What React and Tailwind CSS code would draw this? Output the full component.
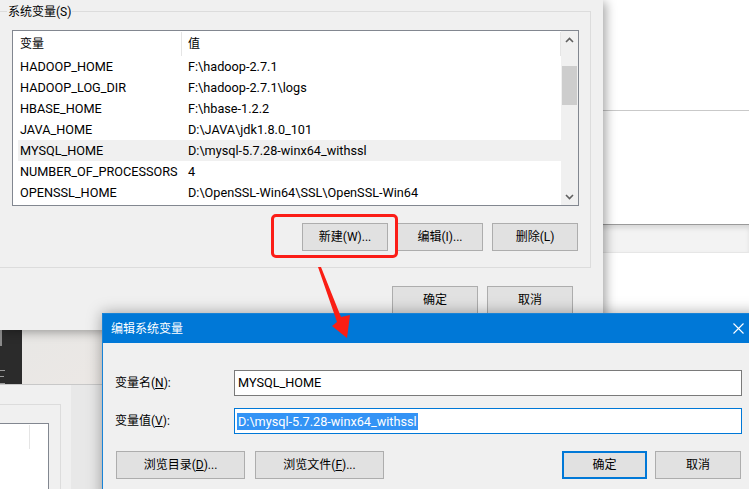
import React from 'react'

const ROWS = [
  ['HADOOP_HOME', 'F:\\hadoop-2.7.1'],
  ['HADOOP_LOG_DIR', 'F:\\hadoop-2.7.1\\logs'],
  ['HBASE_HOME', 'F:\\hbase-1.2.2'],
  ['JAVA_HOME', 'D:\\JAVA\\jdk1.8.0_101'],
  ['MYSQL_HOME', 'D:\\mysql-5.7.28-winx64_withssl'],
  ['NUMBER_OF_PROCESSORS', '4'],
  ['OPENSSL_HOME', 'D:\\OpenSSL-Win64\\SSL\\OpenSSL-Win64'],
]

function Btn({ children, primary, className = '' }) {
  const edge = primary ? 'border-2 border-[#0078d7]' : 'border border-[#adadad]'
  return (
    <div className={`flex h-[28px] items-center justify-center bg-[#e1e1e1] text-[12px] text-black ${edge} ${className}`}>
      {children}
    </div>
  )
}

function Chevron({ down }) {
  return (
    <svg width="9" height="6" viewBox="0 0 9 6">
      <path d={down ? 'M1 1 L4.5 4.5 L8 1' : 'M1 5 L4.5 1.5 L8 5'} stroke="#606060" strokeWidth="1.6" fill="none" />
    </svg>
  )
}

function VarList() {
  return (
    <div className="ml-[13px] mt-[18px] flex h-[176px] w-[567px] border border-[#828790] bg-white">
      <div className="flex-1 pl-[5px]">
        <div className="flex h-[25px] items-center text-[12px]">
          <div className="flex h-[24px] w-[164px] items-center border-r border-[#e5e5e5] pl-[2px]">变量</div>
          <div className="flex h-[24px] flex-1 items-center border-r border-[#e5e5e5] pl-[6px]">值</div>
        </div>
        {ROWS.map(([name, value]) => (
          <div
            key={name}
            className={`flex h-[21px] items-center whitespace-nowrap text-[12.7px] leading-[21px] ${name === 'MYSQL_HOME' ? 'bg-[#f0f0f0]' : ''}`}
          >
            <div className="w-[164px] pl-[2px]">{name}</div>
            <div className="flex-1 pl-[6px]">{value}</div>
          </div>
        ))}
      </div>
      <div className="flex w-[17px] flex-col bg-[#f0f0f0]">
        <div className="flex h-[17px] items-center justify-center"><Chevron /></div>
        <div className="flex-1 px-[1px]">
          <div className="mt-[18px] h-[39px] bg-[#cdcdcd]" />
        </div>
        <div className="flex h-[17px] items-center justify-center"><Chevron down /></div>
      </div>
    </div>
  )
}

function BackDialog() {
  return (
    <div className="absolute left-0 top-0 h-[330px] w-[603px] bg-[#f0f0f0] shadow-[3px_2px_10px_rgba(0,0,0,0.35)]">
      <div className="relative ml-[-2px] mt-[11px] h-[257px] w-[593px] border border-[#dcdcdc]">
        <span className="absolute left-[8px] top-[-9px] bg-[#f0f0f0] px-[1px] text-[12px] leading-[18px]">系统变量(S)</span>
        <VarList />
        <div className="mt-[17px] flex justify-end gap-[9px] pr-[12px]">
          <Btn className="w-[86px]">新建(W)...</Btn>
          <Btn className="w-[86px]">编辑(I)...</Btn>
          <Btn className="w-[86px]">删除(L)</Btn>
        </div>
      </div>
      <div className="mt-[18px] flex justify-end gap-[9px] pr-[30px]">
        <Btn className="w-[86px]">确定</Btn>
        <Btn className="w-[86px]">取消</Btn>
      </div>
      <div className="absolute left-[271px] top-[214px] h-[44px] w-[127px] rounded-[5px] border-[3px] border-[#fb1d17]" />
    </div>
  )
}

function RightWindows() {
  return (
    <div className="absolute left-[590px] top-0 flex h-[313px] w-[160px] flex-col bg-white">
      <div className="h-[111px] border-b border-[#c9c9c9]" />
      <div className="h-[113px]" />
      <div className="h-[29px] border-b border-t border-[#e6e6e6] border-t-[#9a9a9a] bg-[#f3f3f3] shadow-[inset_0_3px_5px_rgba(0,0,0,0.12)]" />
      <div className="flex-1" />
    </div>
  )
}

function LowerLeft() {
  return (
    <div className="absolute left-0 top-[330px] flex h-[159px] w-[110px] flex-col">
      <div className="flex h-[75px]">
        <div className="flex w-[22px] flex-col bg-[#2b2b2b]">
          <div className="h-[16px] w-[2px] bg-[#8a8a8a]" />
          <div className="mt-[24px] h-[1px] w-[5px] bg-[#9a9a9a]" />
          <div className="mt-[5px] h-[1px] w-[4px] bg-[#9a9a9a]" />
          <div className="mt-[6px] h-[1px] w-[5px] bg-[#9a9a9a]" />
        </div>
        <div className="flex-1 bg-gradient-to-br from-[#e8e7e5] to-[#ece8e5]" />
      </div>
      <div className="flex flex-1 border-t border-[#c8c8c8] bg-[#f0f0f0]">
        <div className="w-[71px] overflow-hidden">
          <div className="ml-[-10px] mt-[19px] h-[100px] w-[71px] border border-[#dcdcdc]">
            <div className="mt-[18px] h-[80px] w-[58px] border border-[#828790] bg-white pt-[1px]">
              <div className="h-[24px] w-[38px] border-r border-[#e5e5e5]" />
            </div>
          </div>
        </div>
        <div className="flex-1 bg-[#e8e8e8]" />
      </div>
    </div>
  )
}

function EditDialog() {
  return (
    <div className="absolute left-[102px] top-[313px] h-[190px] w-[660px] border border-[#1883d7] bg-[#f0f0f0] shadow-[0_0_14px_rgba(0,0,0,0.35)]">
      <div className="flex h-[29px] items-center bg-[#0078d7] pl-[8px] text-[12px] text-white">
        <span>编辑系统变量</span>
        <svg className="ml-auto mr-[17px]" width="11" height="11" viewBox="0 0 11 11">
          <path d="M0.5 0.5 L10.5 10.5 M10.5 0.5 L0.5 10.5" stroke="#ffffff" strokeWidth="1.1" />
        </svg>
      </div>
      <div className="pl-[12px]">
        <div className="mt-[27px] flex items-center">
          <div className="w-[119px] text-[12px]">变量名(<span className="underline">N</span>):</div>
          <div className="flex h-[26px] w-[508px] items-center border border-[#7a7a7a] bg-white pl-[3px] text-[12.7px]">MYSQL_HOME</div>
        </div>
        <div className="mt-[12px] flex items-center">
          <div className="w-[119px] text-[12px]">变量值(<span className="underline">V</span>):</div>
          <div className="flex h-[26px] w-[508px] items-center border border-[#0078d7] bg-white pl-[2px] text-[12.7px]">
            <span className="bg-[#3393f5] px-[1px] leading-[17px] text-white">D:\mysql-5.7.28-winx64_withssl</span>
          </div>
        </div>
        <div className="ml-[1px] mt-[17px] flex">
          <Btn className="w-[129px]">浏览目录(<span className="underline">D</span>)...</Btn>
          <Btn className="ml-[10px] w-[129px]">浏览文件(<span className="underline">F</span>)...</Btn>
          <Btn primary className="ml-[178px] w-[85px]">确定</Btn>
          <Btn className="ml-[8px] w-[86px]">取消</Btn>
        </div>
      </div>
    </div>
  )
}

export default function App() {
  return (
    <div className="relative h-[489px] w-[749px] overflow-hidden bg-white font-[Roboto,'Noto_Sans_CJK_SC',sans-serif] text-black">
      <RightWindows />
      <LowerLeft />
      <BackDialog />
      <EditDialog />
      <svg className="pointer-events-none absolute left-0 top-0" width="749" height="489" viewBox="0 0 749 489">
        <polygon points="318,267 321,267 341,317 350,315 347,338 332,326 337,322" fill="#fa1e14" />
      </svg>
    </div>
  )
}
